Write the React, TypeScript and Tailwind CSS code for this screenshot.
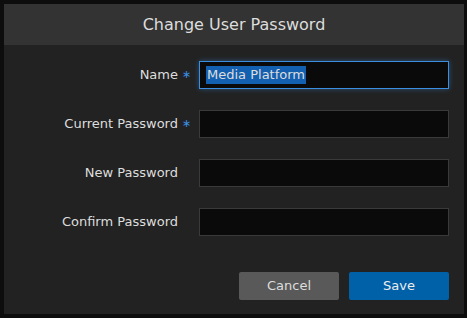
const fields = [
  { label: 'Name', required: true, value: 'Media Platform', active: true },
  { label: 'Current Password', required: true, value: '' },
  { label: 'New Password', required: false, value: '' },
  { label: 'Confirm Password', required: false, value: '' },
];

export default function App() {
  return (
    <div className="w-[467px] h-[318px] bg-[#0d0d0d] p-[4px] pr-[3px] pb-[4px] font-['DejaVu_Sans',sans-serif]">
      <div className="w-[460px] h-[310px] bg-[#222222] flex flex-col">
        <div className="h-[41px] bg-[#333333] flex items-center justify-center text-[16px] text-[#dddddd]">
          Change User Password
        </div>

        <div className="flex flex-col gap-[21px] pt-[16px]">
          {fields.map(f => (
            <div key={f.label} className="flex items-center h-[28px]">
              <div className="w-[174px] text-right text-[13px] text-[#dddddd]">{f.label}</div>
              <div className="w-[21px] pl-[4px] text-[11px] text-[#3a8ee6]">{f.required ? '∗' : ''}</div>
              <div
                className={`w-[250px] h-[28px] bg-[#0a0a0a] border flex items-center pl-[6px] text-[13px] text-[#dddddd] ${
                  f.active ? 'border-[#3b8ee0] shadow-[0_0_5px_rgba(59,142,224,0.45)]' : 'border-[#3a3a3a]'
                }`}
              >
                {f.value && <span className="bg-[#1460b0] px-[1px] leading-[18px]">{f.value}</span>}
              </div>
            </div>
          ))}
        </div>

        <div className="flex justify-end gap-[10px] pr-[15px] mt-auto mb-[14px]">
          <button className="w-[100px] h-[28px] bg-[#595959] rounded-[2px] text-[13px] text-[#dddddd]">Cancel</button>
          <button className="w-[100px] h-[28px] bg-[#0060a8] rounded-[2px] text-[13px] text-[#eeeeee]">Save</button>
        </div>
      </div>
    </div>
  );
}
